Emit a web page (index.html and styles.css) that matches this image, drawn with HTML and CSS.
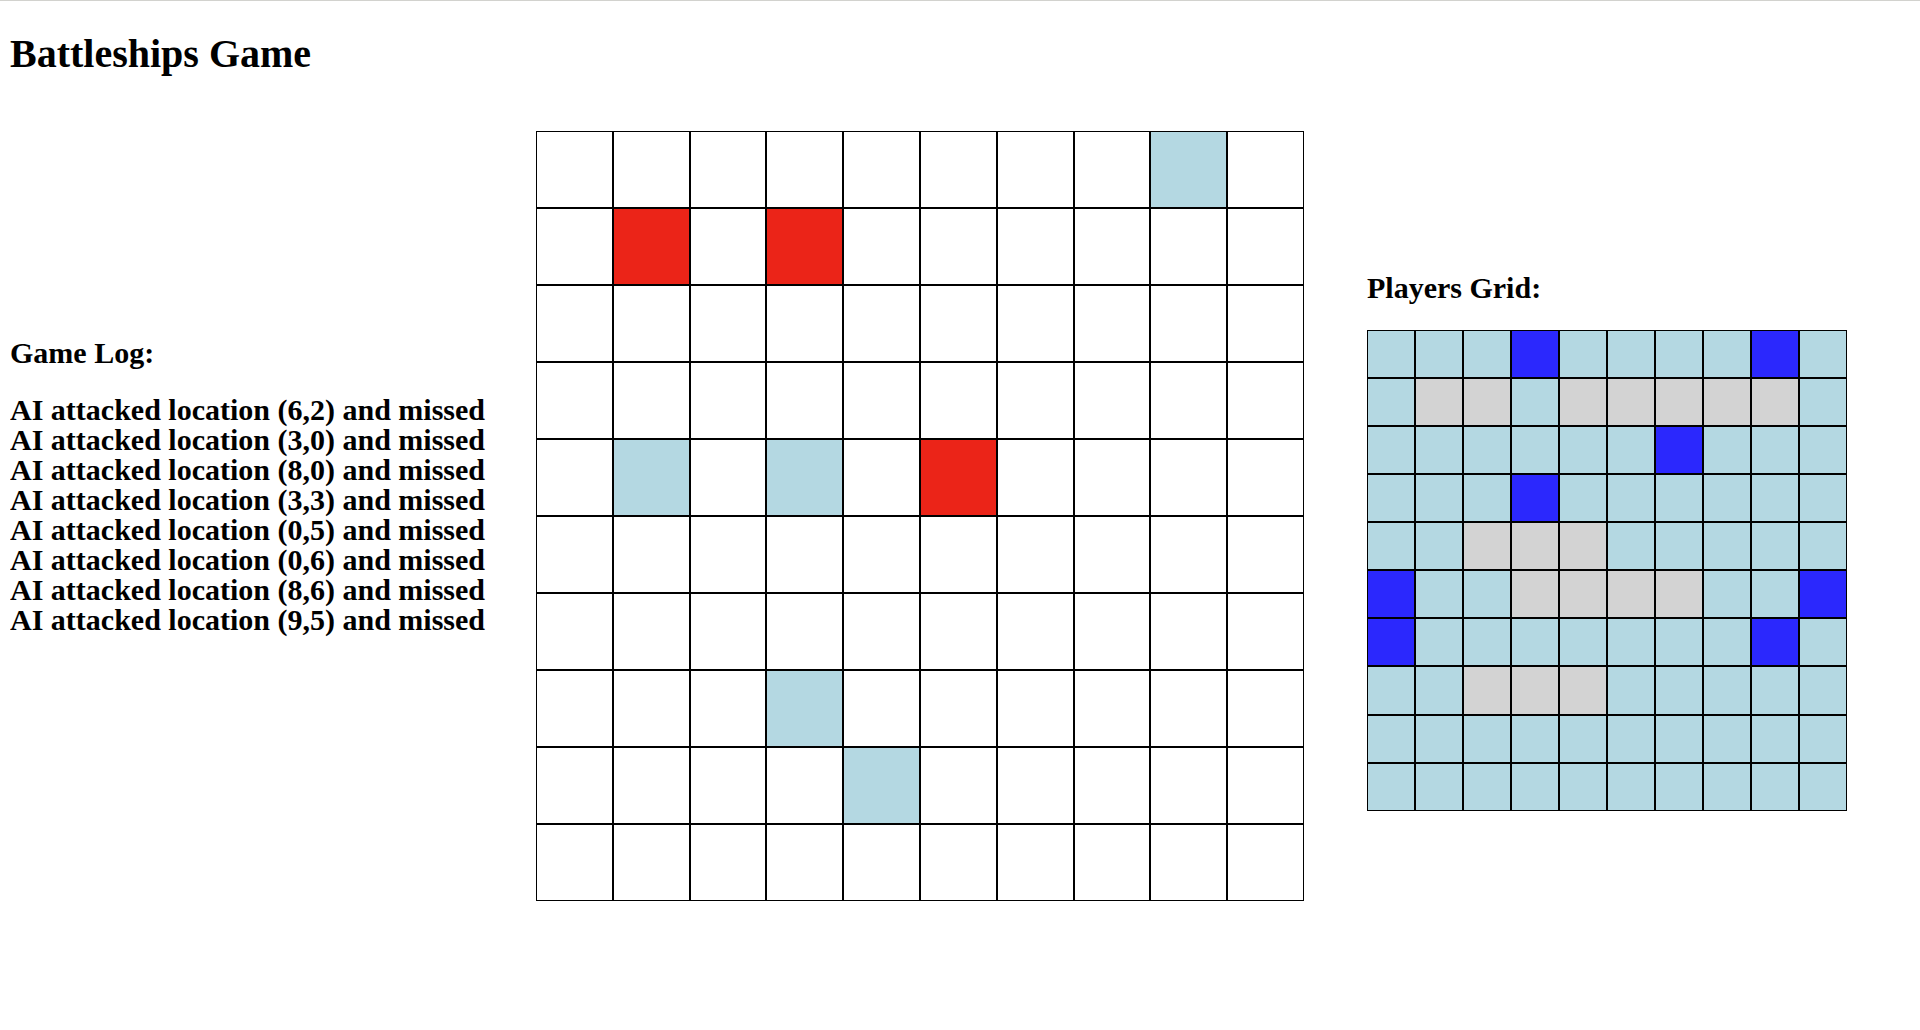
FILE: index.html
```html
<!DOCTYPE html>
<html lang="en">
<head>
    <meta charset="UTF-8">
    <meta name="viewport" content="width=device-width, initial-scale=1.0">
    <title>Battleships</title>
    <link rel="stylesheet" href="styles.css">
</head>
<body>
    <h1>Battleships Game</h1>

    <div id="game">
        <div id="log">
            <h2>Game Log:</h2>
            <div id="entries"></div>
        </div>

        <div id="enemy" class="board"></div>

        <div id="player">
            <h2>Players Grid:</h2>
            <div id="mine" class="board small"></div>
        </div>
    </div>

    <script>
        // w = water, h = hit, m = miss, s = ship, x = shot at
        var enemy = [
            "wwwwwwwwmw",
            "whwhwwwwww",
            "wwwwwwwwww",
            "wwwwwwwwww",
            "wmwmwhwwww",
            "wwwwwwwwww",
            "wwwwwwwwww",
            "wwwmwwwwww",
            "wwwwmwwwww",
            "wwwwwwwwww"
        ];
        var mine = [
            "wwwxwwwwxw",
            "wsswsssssw",
            "wwwwwwxwww",
            "wwwxwwwwww",
            "wwssswwwww",
            "xwwsssswwx",
            "xwwwwwwwxw",
            "wwssswwwww",
            "wwwwwwwwww",
            "wwwwwwwwww"
        ];

        var names = { w: "", h: "hit", m: "miss", s: "ship", x: "shot" };

        function draw(id, rows) {
            var board = document.getElementById(id);
            for (var y = 0; y < 10; y++) {
                for (var x = 0; x < 10; x++) {
                    var cell = document.createElement("div");
                    cell.className = "cell " + names[rows[y][x]];
                    board.appendChild(cell);
                }
            }
        }

        draw("enemy", enemy);
        draw("mine", mine);

        var attacks = [[6,2], [3,0], [8,0], [3,3], [0,5], [0,6], [8,6], [9,5]];
        var entries = document.getElementById("entries");
        attacks.forEach(function (a) {
            var line = document.createElement("div");
            line.textContent = "AI attacked location (" + a[0] + "," + a[1] + ") and missed";
            entries.appendChild(line);
        });
    </script>
</body>
</html>
```

FILE: styles.css
```css
html {
    border-top: 1px solid #d2d2ce;
}
body {
    margin: 10px;
    font-family: "Liberation Serif", "Times New Roman", serif;
    color: #000;
}
h1 {
    font-size: 40px;
    margin: 19px 0 24px;
}
h2 {
    font-size: 30px;
    margin: 24.9px 0;
}
#game {
    display: flex;
    align-items: flex-start;
}
#log {
    width: 496px;
    margin-top: 210px;
}
#entries {
    font-size: 30px;
    font-weight: bold;
    line-height: 30px;
}
.board {
    display: grid;
    grid-template-columns: repeat(10, 1fr);
    grid-template-rows: repeat(10, 1fr);
    width: 768px;
    height: 770px;
}
#enemy {
    margin: 30px;
}
#player {
    margin-top: 145px;
    margin-left: 33px;
}
.board.small {
    width: 480px;
    height: 481px;
}
.cell {
    border: 1px solid #000;
    box-sizing: border-box;
    background: #fff;
}
.small .cell {
    background: #b4d8e2;
}
.cell.miss {
    background: #b4d8e2;
}
.cell.hit {
    background: #eb2418;
}
.small .cell.ship {
    background: #d3d3d3;
}
.small .cell.shot {
    background: #2b28fd;
}
```
